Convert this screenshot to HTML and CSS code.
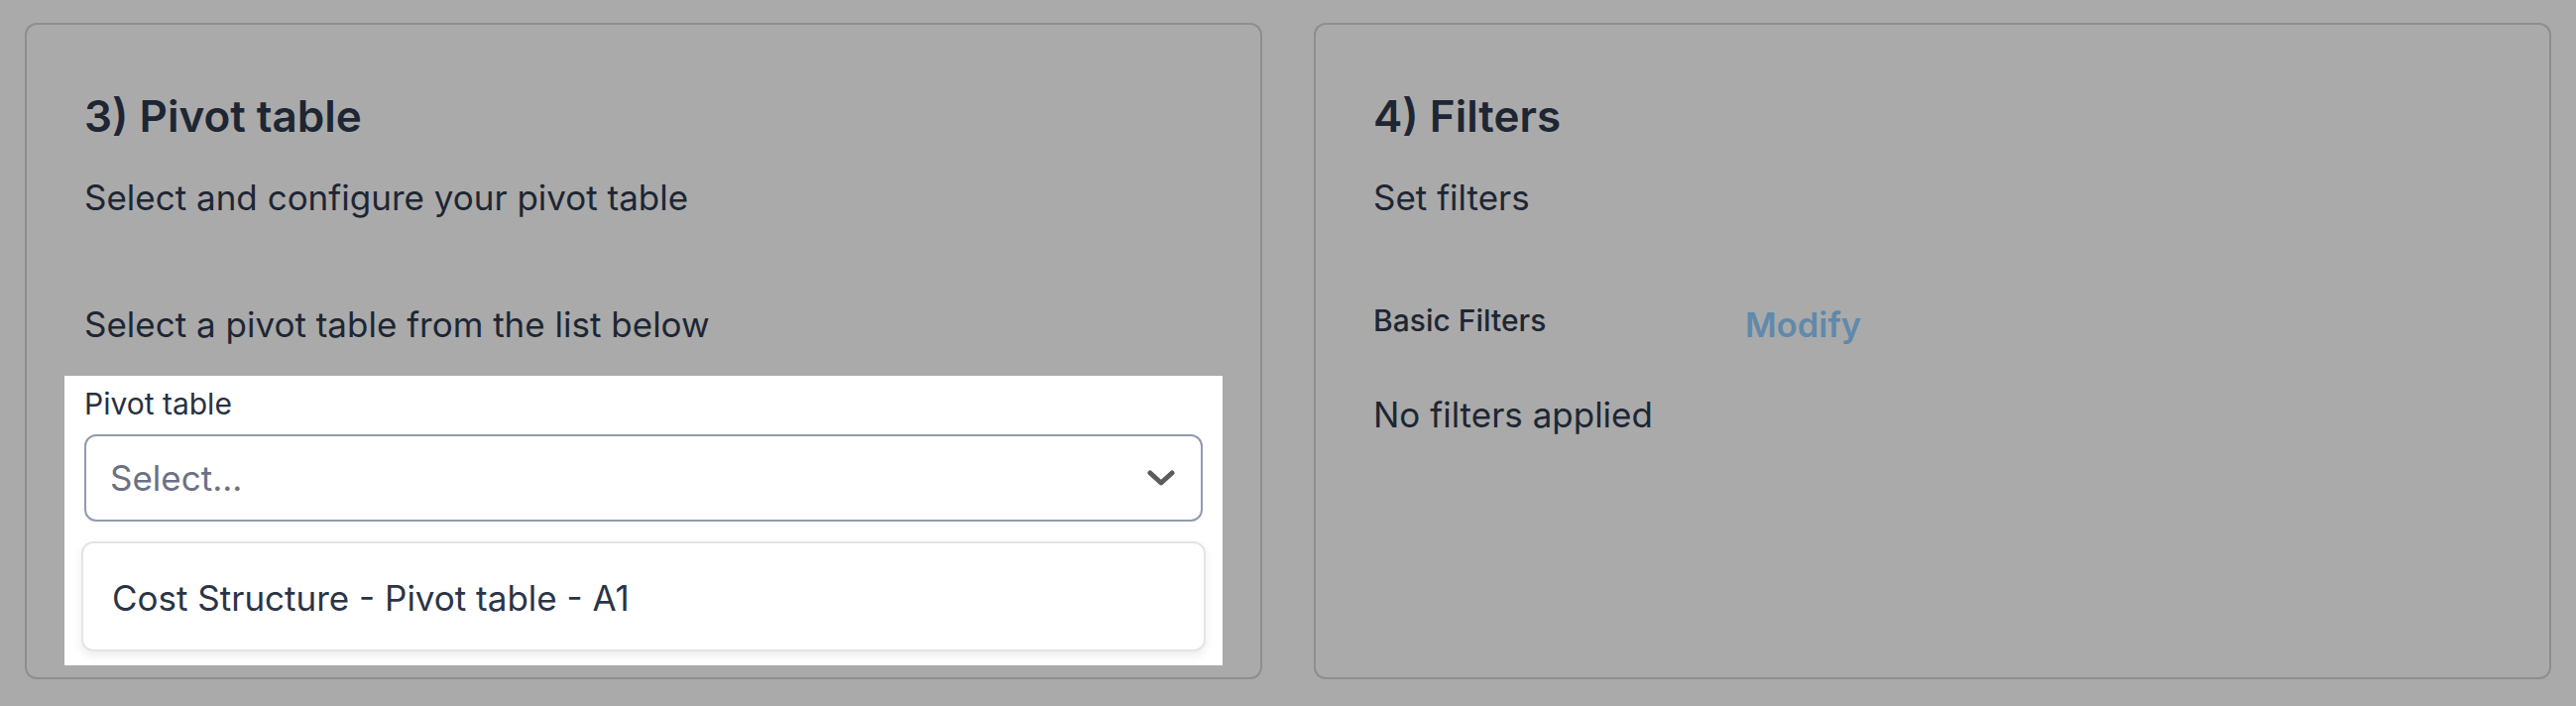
FILE: index.html
```html
<!DOCTYPE html>
<html lang="en">
<head>
  <meta charset="UTF-8" />
  <title>Report setup</title>
  <link rel="stylesheet" href="styles.css">
</head>
<body>
  <div class="cards">
    <!-- Pivot table step -->
    <div class="card">
      <h2>3) Pivot table</h2>
      <p class="sub">Select and configure your pivot table</p>
      <p class="hint">Select a pivot table from the list below</p>
      <div class="spotlight">
        <label class="field-label">Pivot table</label>
        <div class="select">
          <span class="placeholder">Select...</span>
          <svg class="chevron" width="28" height="16" viewBox="0 0 28 16">
            <path d="M3 3 L14 13 L25 3" fill="none" stroke="#5c5c5c" stroke-width="5" stroke-linecap="round" stroke-linejoin="round"/>
          </svg>
        </div>
        <div class="menu">
          <div class="option">Cost Structure - Pivot table - A1</div>
        </div>
      </div>
    </div>

    <!-- Filters step -->
    <div class="card">
      <h2>4) Filters</h2>
      <p class="sub">Set filters</p>
      <div class="filter-row">
        <span class="filter-name">Basic Filters</span>
        <a class="modify">Modify</a>
      </div>
      <p class="empty">No filters applied</p>
    </div>
  </div>
</body>
</html>
```

FILE: styles.css
```css
body {
  margin: 0;
  font-family: Inter, "Noto Sans", sans-serif;
  background: #aaaaaa;
  color: #1e2633;
}
.cards {
  display: grid;
  grid-template-columns: 1fr 1fr;
  gap: 52px;
  padding: 23px 25px 27px;
}
.card {
  box-sizing: border-box;
  height: 662px;
  border: 2px solid #8e8e8e;
  border-radius: 12px;
  padding: 62px 58px 0;
}
h2 {
  margin: 0;
  font-size: 44px;
  line-height: 60px;
  font-weight: 600;
}
.sub {
  margin: 27px 0 0;
  font-size: 35px;
  line-height: 50px;
}
.hint {
  margin: 78px 0 0;
  font-size: 35px;
  line-height: 50px;
}
.spotlight {
  margin: 27px -20px 0;
  padding: 8px 20px 14px;
  background: #fff;
}
.field-label {
  display: block;
  font-size: 30px;
  line-height: 40px;
  color: #283142;
}
.select {
  box-sizing: border-box;
  height: 88px;
  margin-top: 11px;
  border: 2px solid #8f9bad;
  border-radius: 12px;
  padding: 0 26px 0 24px;
  display: flex;
  align-items: center;
  justify-content: space-between;
}
.placeholder {
  font-size: 35px;
  color: #6b7183;
}
.menu {
  box-sizing: border-box;
  height: 111px;
  margin: 20px -3px 0;
  border: 2px solid #e4e4e4;
  border-radius: 12px;
  box-shadow: 0 4px 10px rgba(0, 0, 0, 0.08);
  display: flex;
  align-items: center;
  padding: 2px 29px 0;
}
.option {
  font-size: 35px;
  color: #2b3446;
}
.filter-row {
  display: flex;
  align-items: flex-start;
  margin-top: 79px;
}
.filter-name {
  width: 375px;
  font-size: 30px;
  line-height: 40px;
  font-weight: 500;
}
.modify {
  font-size: 34.5px;
  line-height: 50px;
  font-weight: 600;
  color: #6089ab;
  cursor: pointer;
}
.empty {
  margin: 40px 0 0;
  font-size: 35px;
  line-height: 50px;
}
```
